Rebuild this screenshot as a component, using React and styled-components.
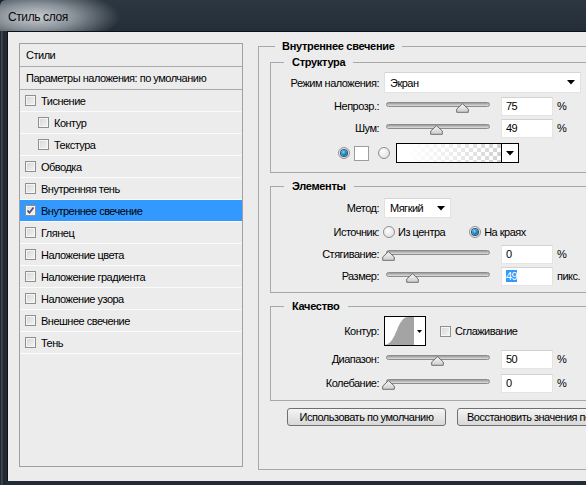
import React from "react";
import styled, { createGlobalStyle } from "styled-components";

const GlobalStyle = createGlobalStyle`
  html, body {
    margin: 0;
    padding: 0;
    background: #1c242c;
    overflow: hidden;
  }
  body {
    font-family: "Liberation Sans", Arial, sans-serif;
    font-size: 11px;
    letter-spacing: -0.5px;
    color: #000;
  }
`;

const Window = styled.div`
  width: 660px;
  height: 485px;
  display: flex;
  flex-direction: column;
  background: linear-gradient(90deg, #161c22 0px, #4a525b 2px, #1f272f 3px, #232c35 7px);
  border-top-left-radius: 6px;
  overflow: hidden;
`;

const TitleBar = styled.div`
  height: 31px;
  flex: none;
  display: flex;
  align-items: center;
  padding: 3px 0 0 8px;
  box-sizing: border-box;
  background:
    radial-gradient(ellipse 84px 28px at 36px 17px, rgba(210, 214, 218, 0.95) 0%, rgba(180, 187, 194, 0.7) 45%, rgba(40, 50, 60, 0) 100%),
    linear-gradient(#2c3741, #242e38);
  font-size: 12px;
  letter-spacing: -0.4px;
  color: #0a0a0a;
`;

const Body = styled.div`
  flex: 1;
  margin: 0 0 4px 7px;
  border-left: 1px solid #0d1116;
  border-top: 1px solid #0d1116;
  background: #ececec;
  display: flex;
  gap: 15px;
  padding: 11px 0 0 11px;
`;

/* ---------- left list of styles ---------- */

const StyleList = styled.div`
  width: 224px;
  height: 424px;
  flex: none;
  box-sizing: border-box;
  border: 1px solid #a0a0a0;
  background: #ececec;
`;

const HeaderRow = styled.div`
  height: 22px;
  display: flex;
  align-items: center;
  padding-left: 6px;
  border-bottom: 1px solid #a9a9a9;
`;

const StyleRow = styled.div`
  height: 21px;
  display: flex;
  align-items: center;
  gap: 5px;
  padding-left: ${(p) => (p.$nested ? 18 : 5)}px;
  border-bottom: 1px solid #fbfbfb;
  background: ${(p) => (p.$active ? "#3399ff" : "transparent")};
`;

const Box = styled.span`
  width: 11px;
  height: 11px;
  flex: none;
  box-sizing: border-box;
  border: 1px solid #8e8f8f;
  background: linear-gradient(135deg, #d6d6d6, #f4f4f4);
  box-shadow: inset 0 0 0 1px #f6f6f6;
  display: flex;
  align-items: center;
  justify-content: center;
`;

const Check = ({ checked }) => (
  <Box>
    {checked && (
      <svg width="9" height="9" viewBox="0 0 9 9">
        <path d="M1.5 4.5 L3.5 6.8 L7.5 1.5" fill="none" stroke="#3b4d7a" strokeWidth="1.6" />
      </svg>
    )}
  </Box>
);

/* ---------- right settings area ---------- */

const Settings = styled.div`
  flex: 1;
  margin-top: -4px;
`;

const Group = styled.fieldset`
  margin: ${(p) => p.$mt || 0}px 0 0 0;
  padding: 0 0 ${(p) => p.$pb || 0}px ${(p) => p.$pl || 0}px;
  border: 1px solid #a8a8a8;
  border-right: none;
  min-width: 0;
  height: ${(p) => (p.$h ? `${p.$h}px` : "auto")};
  box-sizing: border-box;
`;

const Legend = styled.legend`
  font-weight: bold;
  letter-spacing: -0.3px;
  line-height: 14px;
  padding: 0 ${(p) => p.$pad}px;
  margin-left: ${(p) => p.$ml}px;
`;

const Row = styled.div`
  height: ${(p) => p.$h || 22}px;
  margin-top: ${(p) => p.$mt || 0}px;
  display: flex;
  align-items: center;
  gap: ${(p) => p.$gap ?? 5}px;
`;

const Label = styled.span`
  width: 108px;
  flex: none;
  text-align: right;
`;

const Select = styled.div`
  width: ${(p) => p.$w}px;
  height: ${(p) => p.$hh || 21}px;
  box-sizing: border-box;
  background: #fff;
  border: 1px solid #e2e2e2;
  border-top-color: #d4d4d4;
  display: flex;
  align-items: center;
  justify-content: space-between;
  padding: 0 5px 0 5px;
`;

const Arrow = () => (
  <svg width="8" height="5" viewBox="0 0 8 5">
    <path d="M0 0 H8 L4 4.5 Z" fill="#000" />
  </svg>
);

const SliderBox = styled.div`
  position: relative;
  width: 112px;
  height: 22px;
  flex: none;
`;

const Track = styled.div`
  position: absolute;
  left: 2px;
  top: 7px;
  width: 104px;
  height: 5px;
  box-sizing: border-box;
  border-radius: 3px;
  border: 1px solid #8c8c8c;
  background: linear-gradient(#9a9a9a, #c4c4c4 60%, #dedede);
`;

const Thumb = styled.svg`
  position: absolute;
  top: 8px;
`;

const Slider = ({ pos }) => (
  <SliderBox>
    <Track />
    <Thumb width="13" height="10" viewBox="0 0 13 10" style={{ left: 4 + pos * 99 - 6.5 }}>
      <defs>
        <linearGradient id="thumbFill" x1="0" y1="0" x2="0" y2="1">
          <stop offset="0" stopColor="#f7f7f7" />
          <stop offset="1" stopColor="#cdcdcd" />
        </linearGradient>
      </defs>
      <path d="M6.5 0.7 L12.3 6 L12.3 9.3 L0.7 9.3 L0.7 6 Z" fill="url(#thumbFill)" stroke="#6e6e6e" strokeWidth="1" />
    </Thumb>
  </SliderBox>
);

const Field = styled.div`
  width: 52px;
  height: 19px;
  flex: none;
  box-sizing: border-box;
  background: #fff;
  border: 1px solid #e4e4e4;
  border-top-color: #d2d2d2;
  display: flex;
  align-items: center;
  padding-left: 4px;
`;

const Selected = styled.span`
  background: #3399ff;
  color: #fff;
`;

const Unit = styled.span`
  margin-left: -1px;
`;

const Radio = styled.span`
  width: 12px;
  height: 12px;
  flex: none;
  box-sizing: border-box;
  border-radius: 50%;
  border: 1px solid #8e9092;
  background: radial-gradient(circle at 40% 35%, #ffffff, #d8d8d8);
  display: flex;
  align-items: center;
  justify-content: center;
  &::after {
    content: "";
    display: ${(p) => (p.$on ? "block" : "none")};
    width: 6px;
    height: 6px;
    border-radius: 50%;
    background: radial-gradient(circle at 40% 35%, #7fd3ff, #1a8fd0 45%, #0a4b7a);
    box-shadow: 0 0 0 1px #34506a;
  }
`;

const RadioOption = styled.span`
  display: flex;
  align-items: center;
  gap: 3px;
  margin-right: ${(p) => p.$mr || 0}px;
`;

const ColorRow = styled(Row)`
  padding-left: 67px;
`;

const Spacer = styled.span`
  width: ${(p) => p.$w}px;
  flex: none;
`;

const Swatch = styled.span`
  width: 15px;
  height: 15px;
  box-sizing: border-box;
  background: #fff;
  border: 1px solid #9c9c9c;
  margin-right: 9px;
`;

const GradientPick = styled.div`
  width: 123px;
  height: 20px;
  box-sizing: border-box;
  border: 1px solid #000;
  display: flex;
`;

const GradientFill = styled.div`
  flex: 1;
  background:
    linear-gradient(90deg, #fff 8%, rgba(255, 255, 255, 0.6) 55%, rgba(255, 255, 255, 0) 100%),
    repeating-conic-gradient(#d2d2d2 0 25%, #ffffff 0 50%) 0 0 / 8px 8px;
`;

const PickArrow = styled.div`
  width: 16px;
  border-left: 1px solid #000;
  background: #fff;
  display: flex;
  align-items: center;
  justify-content: center;
`;

const ContourPick = styled.div`
  width: 42px;
  height: 30px;
  box-sizing: border-box;
  border: 1px solid #000;
  background: #fff;
  display: flex;
  margin-right: 9px;
`;

const ContourArrow = styled.div`
  flex: 1;
  display: flex;
  align-items: center;
  justify-content: center;
`;

const SmallArrow = () => (
  <svg width="5" height="3" viewBox="0 0 5 3">
    <path d="M0 0 H5 L2.5 3 Z" fill="#000" />
  </svg>
);

const CheckLabel = styled.span`
  display: flex;
  align-items: center;
  gap: 4px;
`;

const Buttons = styled.div`
  display: flex;
  gap: 11px;
  margin: 7px 0 0 17px;
`;

const Button = styled.button`
  height: 18px;
  width: ${(p) => (p.$w ? `${p.$w}px` : "auto")};
  flex: none;
  padding: 0 9px;
  border: 1px solid #6f6f6f;
  border-radius: 3px;
  background: linear-gradient(#f5f5f5, #e6e6e6 50%, #d8d8d8);
  font-family: "Liberation Sans", Arial, sans-serif;
  font-size: 11px;
  letter-spacing: -0.5px;
  color: #000;
  white-space: nowrap;
`;

const styles = [
  { name: "Тиснение" },
  { name: "Контур", nested: true },
  { name: "Текстура", nested: true },
  { name: "Обводка" },
  { name: "Внутренняя тень" },
  { name: "Внутреннее свечение", checked: true, active: true },
  { name: "Глянец" },
  { name: "Наложение цвета" },
  { name: "Наложение градиента" },
  { name: "Наложение узора" },
  { name: "Внешнее свечение" },
  { name: "Тень" },
];

const SliderRow = ({ label, pos, value, unit = "%", selected, mt }) => (
  <Row $mt={mt}>
    <Label>{label}</Label>
    <Slider pos={pos} />
    <Field>{selected ? <Selected>{value}</Selected> : value}</Field>
    <Unit>{unit}</Unit>
  </Row>
);

export default function App() {
  return (
    <>
      <GlobalStyle />
      <Window>
        <TitleBar>Стиль слоя</TitleBar>
        <Body>
          <StyleList>
            <HeaderRow>Стили</HeaderRow>
            <HeaderRow>Параметры наложения: по умолчанию</HeaderRow>
            {styles.map((s) => (
              <StyleRow key={s.name} $nested={s.nested} $active={s.active}>
                <Check checked={s.checked} />
                {s.name}
              </StyleRow>
            ))}
          </StyleList>

          <Settings>
            <Group $pl={11} $h={431}>
              <Legend $ml={5} $pad={7}>Внутреннее свечение</Legend>

              <Group $mt={2} $pb={8}>
                <Legend $ml={13} $pad={8}>Структура</Legend>
                <Row $h={21} $mt={3}>
                  <Label>Режим наложения:</Label>
                  <Select $w={197}>
                    Экран
                    <Arrow />
                  </Select>
                </Row>
                <SliderRow label="Непрозр.:" pos={0.75} value="75" mt={2} />
                <SliderRow label="Шум:" pos={0.49} value="49" />
                <ColorRow $mt={3} $gap={0}>
                  <Radio $on />
                  <Spacer $w={4} />
                  <Swatch />
                  <Radio />
                  <Spacer $w={6} />
                  <GradientPick>
                    <GradientFill />
                    <PickArrow>
                      <Arrow />
                    </PickArrow>
                  </GradientPick>
                </ColorRow>
              </Group>

              <Group $mt={6} $pb={5}>
                <Legend $ml={13} $pad={8}>Элементы</Legend>
                <Row $mt={4}>
                  <Label>Метод:</Label>
                  <Select $w={67} $hh={20}>
                    Мягкий
                    <Arrow />
                  </Select>
                </Row>
                <Row $mt={2} $gap={4}>
                  <Label>Источник:</Label>
                  <RadioOption $mr={20}>
                    <Radio />
                    Из центра
                  </RadioOption>
                  <RadioOption>
                    <Radio $on />
                    На краях
                  </RadioOption>
                </Row>
                <SliderRow label="Стягивание:" pos={0} value="0" />
                <SliderRow label="Размер:" pos={0.25} value="49" unit="пикс." selected />
              </Group>

              <Group $mt={6} $pb={6}>
                <Legend $ml={13} $pad={8}>Качество</Legend>
                <Row $h={30} $mt={3}>
                  <Label>Контур:</Label>
                  <ContourPick>
                    <svg width="29" height="28" viewBox="0 0 29 28">
                      <path
                        d="M0 28 C 6 27, 9 20, 12 13 C 15 5, 18 1, 22 0 L 29 0 L 29 28 Z"
                        fill="#a4a4a4"
                      />
                    </svg>
                    <ContourArrow>
                      <SmallArrow />
                    </ContourArrow>
                  </ContourPick>
                  <CheckLabel>
                    <Check />
                    Сглаживание
                  </CheckLabel>
                </Row>
                <SliderRow label="Диапазон:" pos={0.5} value="50" mt={2} />
                <SliderRow label="Колебание:" pos={0} value="0" mt={2} />
              </Group>

              <Buttons>
                <Button $w={159}>Использовать по умолчанию</Button>
                <Button>Восстановить значения по умолчанию</Button>
              </Buttons>
            </Group>
          </Settings>
        </Body>
      </Window>
    </>
  );
}
